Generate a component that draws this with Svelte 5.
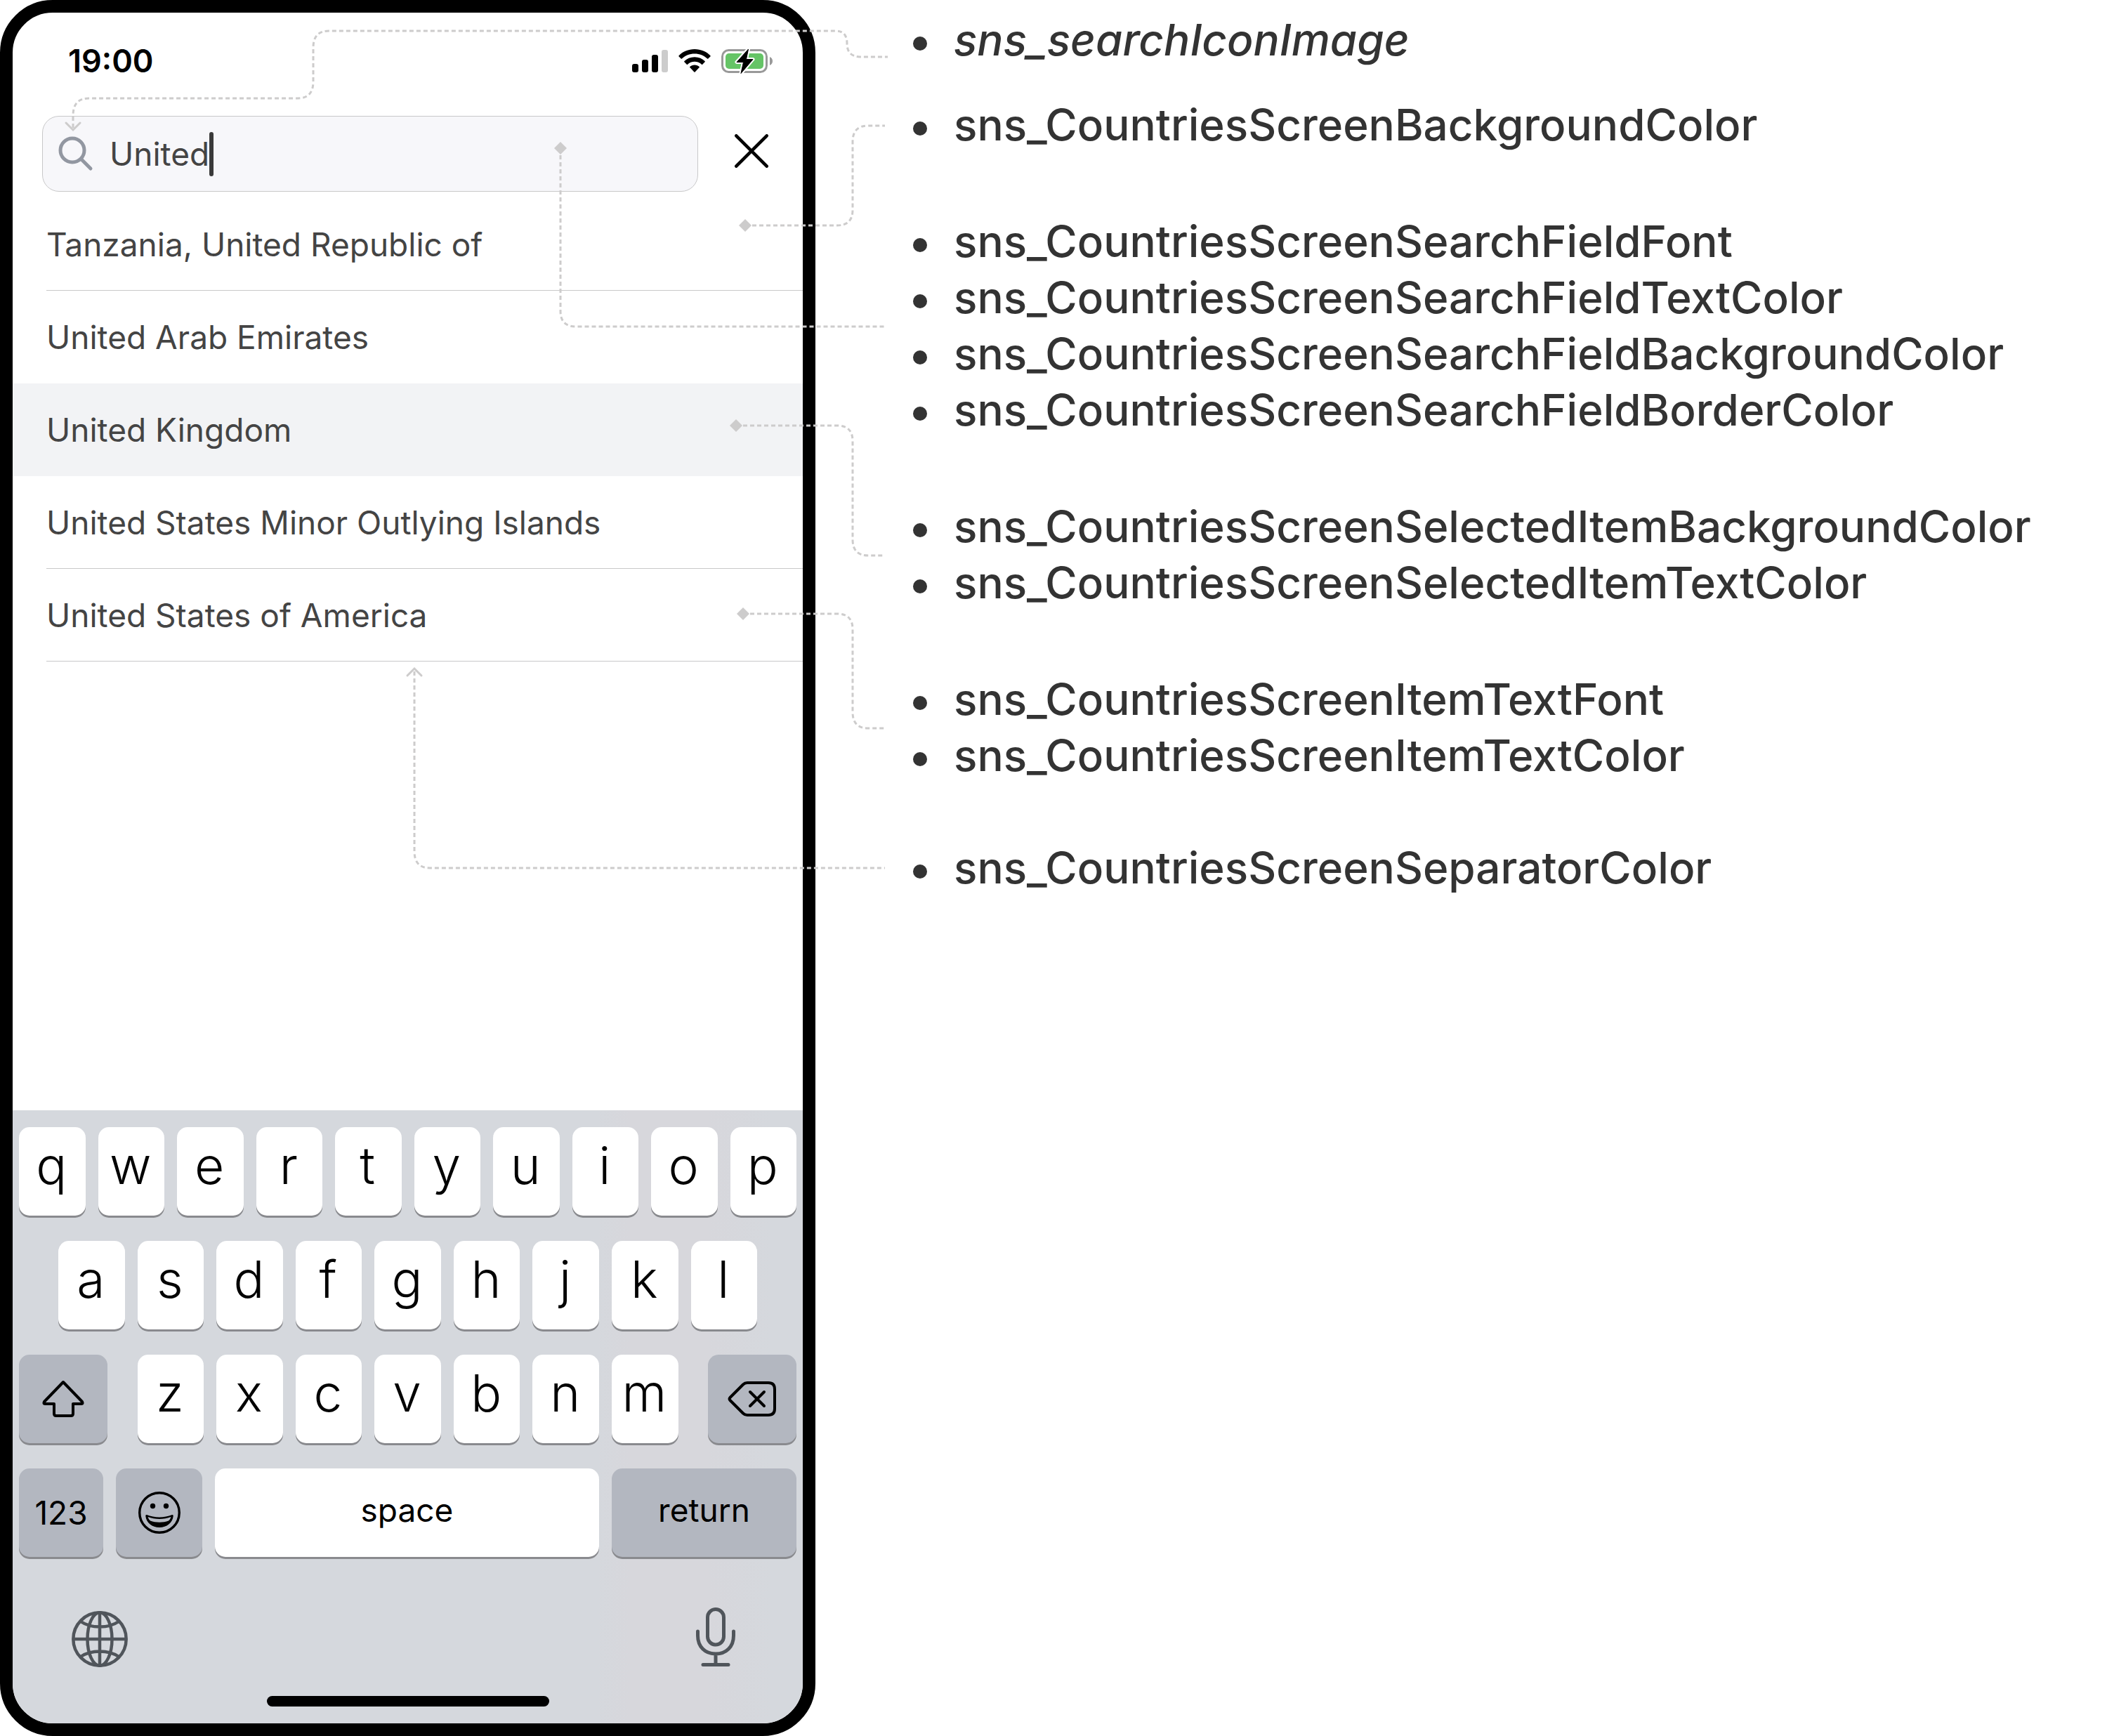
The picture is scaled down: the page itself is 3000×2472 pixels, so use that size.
<script>
  let query = $state('United');

  const countries = [
    { name: 'Tanzania, United Republic of', line: true },
    { name: 'United Arab Emirates', line: false },
    { name: 'United Kingdom', line: false, selected: true },
    { name: 'United States Minor Outlying Islands', line: true },
    { name: 'United States of America', line: true }
  ];

  const topRow = [...'qwertyuiop'];
  const homeRow = [...'asdfghjkl'];
  const lowRow = [...'zxcvbnm'];

  const groups = [
    { kind: 'icon', items: ['sns_searchIconImage'] },
    { kind: 'near', items: ['sns_CountriesScreenBackgroundColor'] },
    {
      kind: 'far',
      items: [
        'sns_CountriesScreenSearchFieldFont',
        'sns_CountriesScreenSearchFieldTextColor',
        'sns_CountriesScreenSearchFieldBackgroundColor',
        'sns_CountriesScreenSearchFieldBorderColor'
      ]
    },
    {
      kind: 'far',
      items: [
        'sns_CountriesScreenSelectedItemBackgroundColor',
        'sns_CountriesScreenSelectedItemTextColor'
      ]
    },
    {
      kind: 'far',
      items: ['sns_CountriesScreenItemTextFont', 'sns_CountriesScreenItemTextColor']
    },
    { kind: 'last', items: ['sns_CountriesScreenSeparatorColor'] }
  ];
</script>

<main class="board">
  <section class="phone" aria-label="Countries screen">
    <header class="status">
      <time>19:00</time>
      <div class="indicators">
        <svg width="51" height="34" viewBox="0 0 51 34" aria-hidden="true">
          <rect x="0" y="21" width="9" height="12" rx="3" />
          <rect x="14" y="15" width="9" height="18" rx="3" />
          <rect x="28" y="8" width="9" height="25" rx="3" />
          <rect x="42" y="1" width="9" height="32" rx="3" fill="#ccc" />
        </svg>
        <svg width="46" height="34" viewBox="0 0 46 34" aria-hidden="true">
          <path d="M23 0C32 0 40 3.500 45.500 9.200Q46 9.800 45.400 10.400L42.300 13.500Q41.700 14 41.100 13.500C36.300 9 30 6.500 23 6.500S9.700 9 4.900 13.500Q4.300 14 3.700 13.500L.6 10.400Q0 9.800.5 9.200C6 3.500 14 0 23 0Z" />
          <path d="M23 11.300C29 11.300 34 13.500 37.600 17.100Q38.200 17.700 37.600 18.300L34.200 21.700Q33.600 22.200 33 21.700C30.400 19.300 27 17.800 23 17.800S15.600 19.300 13 21.700Q12.400 22.200 11.800 21.700L8.400 18.300Q7.800 17.700 8.400 17.100C12 13.500 17 11.300 23 11.300Z" />
          <path d="M23 22.500C25.800 22.500 28 23.400 29.700 24.900Q30.300 25.500 29.700 26.100L23.600 32.500Q23 33 22.400 32.500L16.300 26.100Q15.700 25.500 16.300 24.900C18 23.400 20.200 22.500 23 22.500Z" />
        </svg>
        <svg width="74" height="36" viewBox="0 0 74 36" aria-hidden="true">
          <rect x="1.500" y="2.500" width="63" height="31" rx="9" fill="none" stroke="#999" stroke-width="3" />
          <path d="M69 12C71.500 13 73 15.300 73 18S71.500 23 69 24Z" fill="#999" />
          <rect x="6" y="7" width="54" height="22" rx="5" fill="#65c466" />
          <path d="M38.500 1L22 19.500H31.500L28 35.500L45 15.500H35.500Z" stroke="#fff" stroke-width="5" stroke-linejoin="round" />
          <path d="M38.500 1L22 19.500H31.500L28 35.500L45 15.500H35.500Z" stroke="#000" stroke-width="1" stroke-linejoin="round" />
        </svg>
      </div>
    </header>

    <div class="search">
      <label class="field">
        <svg width="52" height="52" viewBox="0 0 52 52" fill="none" stroke="#9297a1" stroke-width="5" stroke-linecap="round" aria-hidden="true">
          <circle cx="21" cy="21" r="17" />
          <path d="M34 34L47 47" />
        </svg>
        <input type="text" bind:value={query} aria-label="Search countries" />
        <span class="caret"></span>
      </label>
      <button class="close" type="button" aria-label="Close">
        <svg width="48" height="48" viewBox="0 0 48 48" fill="none" stroke="#000" stroke-width="4.500" stroke-linecap="round" aria-hidden="true">
          <path d="M2.300 2.300L45.700 45.700M45.700 2.300L2.300 45.700" />
        </svg>
      </button>
    </div>

    <ul class="countries">
      {#each countries as c}
        <li class:selected={c.selected}><span class:line={c.line}>{c.name}</span></li>
      {/each}
    </ul>

    <div class="keyboard">
      <div class="row">
        {#each topRow as k}<button type="button" class="key letter">{k}</button>{/each}
      </div>
      <div class="row home">
        {#each homeRow as k}<button type="button" class="key letter">{k}</button>{/each}
      </div>
      <div class="row low">
        <button type="button" class="key dark wide" aria-label="Shift">
          <svg width="60" height="54" viewBox="0 0 60 54" fill="none" stroke="#000" stroke-width="4" stroke-linejoin="round" aria-hidden="true">
            <path d="M30 3L57 31Q58.500 34 56 34H44V48Q44 51 41 51H20Q17 51 17 48V34H4Q1.500 34 3 31Z" />
          </svg>
        </button>
        <div class="row letters">
          {#each lowRow as k}<button type="button" class="key letter">{k}</button>{/each}
        </div>
        <button type="button" class="key dark wide" aria-label="Delete">
          <svg width="70" height="52" viewBox="0 0 70 52" fill="none" stroke="#000" stroke-width="4" stroke-linejoin="round" stroke-linecap="round" aria-hidden="true">
            <path d="M28 3H58Q67 3 67 12V40Q67 49 58 49H28Q24.500 49 22 46.500L3.500 28Q1.500 26 3.500 24L22 5.500Q24.500 3 28 3Z" />
            <path d="M32 16L52 36M52 16L32 36" />
          </svg>
        </button>
      </div>
      <div class="row">
        <button type="button" class="key dark digits">123</button>
        <button type="button" class="key dark emoji" aria-label="Emoji">
          <svg width="60" height="60" viewBox="0 0 60 60" aria-hidden="true">
            <circle cx="30" cy="30" r="28.300" fill="none" stroke="#000" stroke-width="3.400" />
            <ellipse cx="20.500" cy="20.500" rx="3.700" ry="3.700" />
            <ellipse cx="39.500" cy="20.500" rx="3.700" ry="3.700" />
            <path fill-rule="evenodd" d="M12 33C23 37.500 37 37.500 48 33Q50 32.500 49.700 35C48.500 44.500 40.500 51 30 51S11.500 44.500 10.300 35Q10 32.500 12 33ZM13.500 36C14.500 39 16 41 17 41.500C24.500 44.500 35.500 44.500 43 41.500C44 41 45.500 39 46.500 36C36 40 24 40 13.500 36Z" />
          </svg>
        </button>
        <button type="button" class="key word space">space</button>
        <button type="button" class="key dark word return">return</button>
      </div>

      <div class="tools">
        <button type="button" class="tool" aria-label="Next keyboard">
          <svg width="80" height="80" viewBox="0 0 80 80" fill="none" stroke="#50555b" stroke-width="4.500" aria-hidden="true">
            <circle cx="40" cy="40" r="37.700" />
            <ellipse cx="40" cy="40" rx="17.500" ry="37.700" />
            <path d="M40 2V78M2 40H78M13 15Q24 22.500 40 22.500T67 15M13 65Q24 57.500 40 57.500T67 65" />
          </svg>
        </button>
        <button type="button" class="tool" aria-label="Dictate">
          <svg width="56" height="85" viewBox="0 0 56 85" fill="none" stroke="#50555b" stroke-width="5" stroke-linecap="round" aria-hidden="true">
            <rect x="16.500" y="2.500" width="23" height="50.500" rx="11.500" />
            <path d="M2.500 34V40C2.500 56 13 66 28 66S53.500 56 53.500 40V34M28 66V81M10 81.500H46" />
          </svg>
        </button>
      </div>
      <div class="home-bar"></div>
    </div>
  </section>

  <section class="notes">
    {#each groups as g}
      <ul class={g.kind}>
        {#each g.items as item}<li>{item}</li>{/each}
      </ul>
    {/each}
  </section>

  <svg class="links" width="1280" height="1260" viewBox="0 0 1280 1260" aria-hidden="true">
    <g class="dash">
      <path d="M104 182V165Q104 140 126 140H424Q446 140 446 116V68Q446 44 468 44H1190Q1206 44 1206 62T1224 81H1264" />
      <path d="M1061 321H1192Q1214 321 1214 299V202Q1214 179 1236 179H1260" />
      <path d="M798 211V443Q798 465 820 465H1260" />
      <path d="M1048 606H1192Q1214 606 1214 628V768Q1214 791 1236 791H1260" />
      <path d="M1058 874H1192Q1214 874 1214 896V1014Q1214 1037 1236 1037H1260" />
      <path d="M590 956V1212Q590 1236 612 1236H1260" />
    </g>
    <g class="tip">
      <path d="M94 175L104 185L114 175" />
      <path d="M580 962L590 952L600 962" />
    </g>
    <g class="knot">
      <path d="M1061 312L1070 321L1061 330L1052 321Z" />
      <path d="M798 202L807 211L798 220L789 211Z" />
      <path d="M1048 597L1057 606L1048 615L1039 606Z" />
      <path d="M1058 865L1067 874L1058 883L1049 874Z" />
    </g>
  </svg>
</main>

<style>
  :global(body) {
    background: #fff;
  }
  * {
    box-sizing: border-box;
  }
  ul {
    list-style: none;
    margin: 0;
    padding: 0;
  }
  button {
    border: 0;
    padding: 0;
    background: none;
    font: inherit;
    color: inherit;
  }
  svg {
    display: block;
    flex: none;
  }
  .board {
    position: relative;
    display: flex;
    align-items: flex-start;
    font-family: Inter, 'Liberation Sans', sans-serif;
    font-size: 46px;
  }
  .phone {
    flex: none;
    width: 1161px;
    border: 18px solid #000;
    border-radius: 75px;
    background: #fff;
    overflow: hidden;
  }
  .status {
    display: flex;
    justify-content: space-between;
    align-items: center;
    padding: 51px 42px 60px 79px;
    color: #000;
  }
  .status time {
    font-size: 45px;
    line-height: 36px;
    font-weight: 600;
  }
  .indicators {
    display: flex;
    align-items: center;
    gap: 15px;
  }
  .search {
    display: flex;
    align-items: center;
    gap: 52px;
    padding: 0 49px 0 42px;
  }
  .field {
    flex: 1;
    display: flex;
    align-items: center;
    height: 108px;
    padding-left: 21px;
    border: 1px solid #c8c8c9;
    border-radius: 24px;
    background: #f7f7fa;
  }
  .field input {
    field-sizing: content;
    margin-left: 22px;
    padding: 0;
    border: 0;
    outline: 0;
    background: none;
    font: inherit;
    color: #444;
  }
  .caret {
    width: 6px;
    height: 63px;
    border-radius: 3px;
    background: #3a3a3a;
  }
  .close {
    padding-bottom: 8px;
  }
  .countries {
    min-height: 1308px;
    padding-top: 9px;
    color: #444;
  }
  .countries li {
    padding-left: 48px;
  }
  .countries span {
    display: block;
    height: 132px;
    line-height: 132px;
    border-bottom: 1px solid transparent;
  }
  .countries .line {
    border-color: #c8c8c9;
  }
  .countries .selected {
    background: #f2f3f5;
  }
  .keyboard {
    display: flex;
    flex-direction: column;
    gap: 36px;
    padding: 24px 9px;
    background: linear-gradient(90deg, #d5d8dd 74%, #d7d7dc 78%, #d7d7dc 88%, #d5d8dd 96%);
    color: #000;
  }
  .row {
    display: flex;
    gap: 18px;
  }
  .home {
    padding: 0 56px;
  }
  .low {
    justify-content: space-between;
  }
  .letters {
    flex: 0 0 770px;
  }
  .key {
    display: flex;
    align-items: center;
    justify-content: center;
    height: 126px;
    border-radius: 15px;
    background: #fff;
    box-shadow: 0 3px 0 #898a8e;
  }
  .letter {
    flex: 1;
    padding: 0 2px 17px 0;
    font-size: 73px;
    font-weight: 350;
    line-height: 88px;
  }
  .dark {
    background: #b3b7c0;
  }
  .wide {
    width: 126px;
  }
  .digits {
    width: 120px;
  }
  .emoji {
    width: 123px;
  }
  .word {
    padding-bottom: 8px;
  }
  .space {
    flex: 1;
  }
  .return {
    width: 263px;
  }
  .tools {
    display: flex;
    justify-content: space-between;
    align-items: flex-end;
    padding: 36px 87px 5px 75px;
  }
  .home-bar {
    align-self: center;
    width: 402px;
    height: 15px;
    border-radius: 8px;
    background: #000;
  }
  .notes {
    flex: 1;
    padding: 17px 0 0 139px;
    font-size: 62px;
    line-height: 80px;
    font-weight: 500;
    color: #333;
  }
  .notes li {
    display: flex;
    align-items: center;
    gap: 38px;
  }
  .notes li::before {
    content: '';
    flex: none;
    width: 20px;
    height: 20px;
    margin-top: 10px;
    border-radius: 50%;
    background: #333;
  }
  .icon {
    font-style: italic;
  }
  .near {
    margin-top: 41px;
  }
  .far {
    margin-top: 86px;
  }
  .last {
    margin-top: 80px;
  }
  .links {
    position: absolute;
    top: 0;
    left: 0;
    pointer-events: none;
    fill: none;
    stroke: #cdcccc;
    stroke-width: 3;
  }
  .dash {
    stroke-dasharray: 6 4;
  }
  .tip {
    stroke-linecap: round;
  }
  .knot {
    fill: #cdcccc;
    stroke: none;
  }
</style>
